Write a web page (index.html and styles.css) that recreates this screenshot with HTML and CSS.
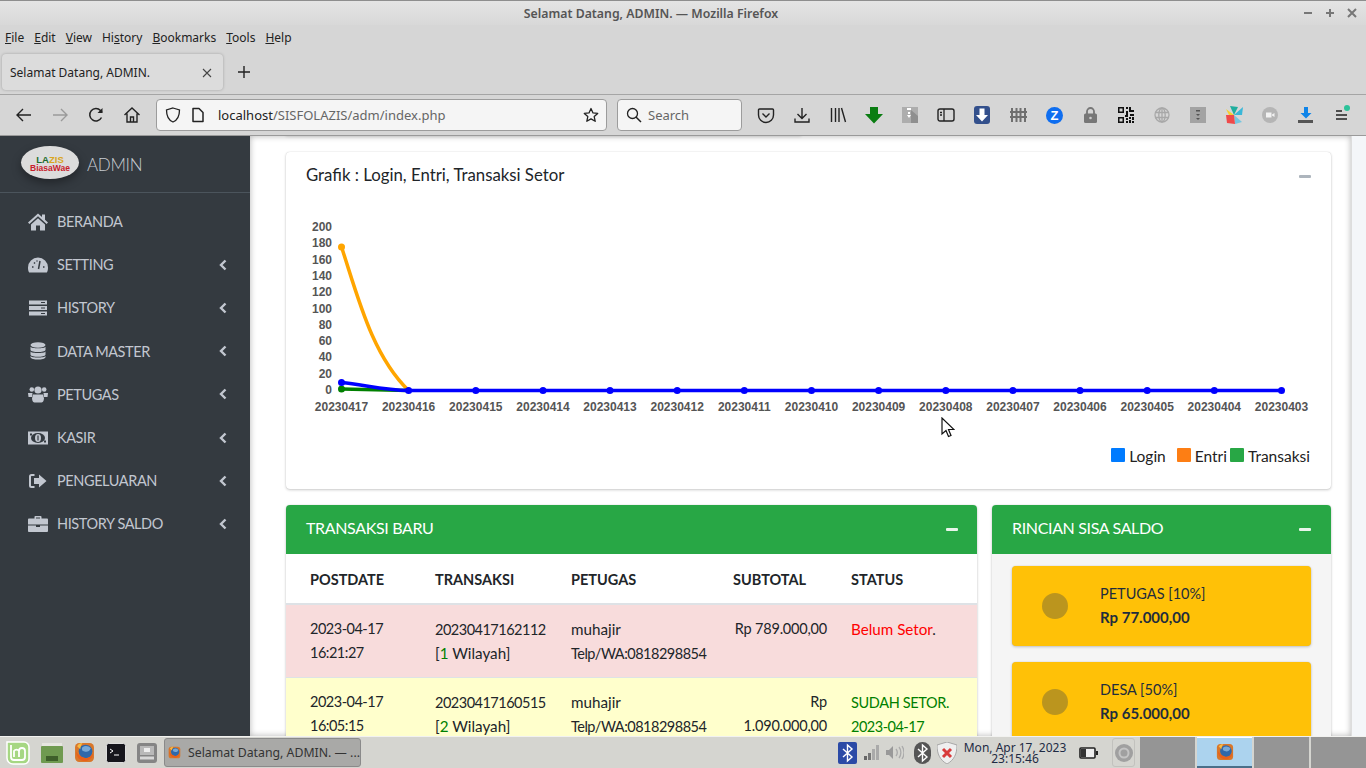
FILE: index.html
```html
<!DOCTYPE html>
<html lang="en">
<head>
    <meta charset="UTF-8">
    <title>Selamat Datang, ADMIN.</title>
    <link rel="stylesheet" href="styles.css">
</head>
<body>
    <svg class="defs" width="0" height="0">
        <symbol id="firefox" viewBox="0 0 20 20">
            <rect x="1" y="1" width="18" height="18" rx="4" fill="#d9772a"/>
            <circle cx="11" cy="9" r="6.500" fill="#2f68aa"/>
            <path d="M8 5c3-2 6-1 8 1-1 3-4 4-6 3-2 0-3-2-2-4z" fill="#79a9d6"/>
            <path d="M2 9c0 6 5 10 10 9 3-1 6-3 6-7-2 3-5 5-8 4-4-1-6-3-8-6z" fill="#e8601a"/>
            <path d="M3 4c1-2 3-3 5-3-1 2-2 4-2 6-1-1-2-2-3-3z" fill="#f4bb45"/>
        </symbol>
    </svg>

    <!-- Window title -->
    <div class="titlebar">
        <span class="title">Selamat Datang, ADMIN. — Mozilla Firefox</span>
        <div class="win-buttons">
            <svg width="10" height="10" viewBox="0 0 10 10"><path d="M1 5h8" stroke="#777" stroke-width="2"/></svg>
            <svg width="10" height="10" viewBox="0 0 10 10"><path d="M1 5h8M5 1v8" stroke="#777" stroke-width="2"/></svg>
            <svg width="10" height="10" viewBox="0 0 10 10"><path d="M1 1l8 8M9 1l-8 8" stroke="#777" stroke-width="2"/></svg>
        </div>
    </div>

    <div class="menubar">
        <span><u>F</u>ile</span>
        <span><u>E</u>dit</span>
        <span><u>V</u>iew</span>
        <span>Hi<u>s</u>tory</span>
        <span><u>B</u>ookmarks</span>
        <span><u>T</u>ools</span>
        <span><u>H</u>elp</span>
    </div>

    <div class="tabbar">
        <div class="tab">
            <span>Selamat Datang, ADMIN.</span>
            <svg width="10" height="10" viewBox="0 0 10 10"><path d="M1 1l8 8M9 1l-8 8" stroke="#444" stroke-width="1.1"/></svg>
        </div>
        <svg class="new-tab" width="14" height="14" viewBox="0 0 14 14"><path d="M7 1v12M1 7h12" stroke="#222" stroke-width="1.4"/></svg>
    </div>

    <div class="navbar">
        <div class="nav-left">
            <svg width="18" height="18" viewBox="0 0 18 18"><path d="M16 9H2M8 3L2 9l6 6" fill="none" stroke="#222" stroke-width="1.4"/></svg>
            <svg width="18" height="18" viewBox="0 0 18 18"><path d="M2 9h14M10 3l6 6-6 6" fill="none" stroke="#9a9a9a" stroke-width="1.4"/></svg>
            <svg width="18" height="18" viewBox="0 0 18 18"><path d="M14.5 11.5A6.2 6.2 0 1 1 13.5 4.5L15 6.5" fill="none" stroke="#222" stroke-width="1.5"/><path d="M15.5 2v5h-5z" fill="#222"/></svg>
            <svg width="18" height="18" viewBox="0 0 18 18"><path d="M1.5 9L9 2l7.5 7M4 7.5V16h10V7.5M7.5 16v-5h3v5" fill="none" stroke="#222" stroke-width="1.4"/></svg>
        </div>
        <div class="urlbar">
            <svg width="16" height="16" viewBox="0 0 16 16"><path d="M8 1l6.5 2c0 6-1.500 10-6.500 12C3 13 1.500 9 1.500 3z" fill="none" stroke="#222" stroke-width="1.300"/></svg>
            <svg class="page-icon" width="14" height="16" viewBox="0 0 14 16"><path d="M2 1.500h6l4 4v9H2z" fill="none" stroke="#222" stroke-width="1.500" stroke-linejoin="round"/></svg>
            <span class="url"><b>localhost</b>/SISFOLAZIS/adm/index.php</span>
            <svg width="16" height="16" viewBox="0 0 16 16"><path d="M8 1.500l2 4.400 4.700.5-3.500 3.200 1 4.700L8 11.900l-4.200 2.400 1-4.700L1.300 6.400 6 5.900z" fill="none" stroke="#222" stroke-width="1.300" stroke-linejoin="round"/></svg>
        </div>
        <div class="searchbar">
            <svg width="16" height="16" viewBox="0 0 16 16"><circle cx="6.500" cy="6.500" r="5" fill="none" stroke="#222" stroke-width="1.300"/><path d="M10 10l5 5" stroke="#222" stroke-width="1.500"/></svg>
            <span>Search</span>
        </div>
        <div class="tools">
            <div class="tool"><svg width="18" height="18" viewBox="0 0 18 18"><path d="M2.500 3h13a1 1 0 0 1 1 1v5a7.500 7.500 0 0 1-15 0V4a1 1 0 0 1 1-1z" fill="none" stroke="#222" stroke-width="1.400"/><path d="M5.500 7.500L9 11l3.500-3.500" fill="none" stroke="#222" stroke-width="1.400"/></svg></div>
            <div class="tool"><svg width="18" height="18" viewBox="0 0 18 18"><path d="M9 2v10M4.500 8L9 12.500 13.500 8M2 12.500V16h14v-3.500" fill="none" stroke="#222" stroke-width="1.400"/></svg></div>
            <div class="tool"><svg width="18" height="18" viewBox="0 0 18 18"><path d="M2.500 2v14M6.500 2v14M10 2v14M12.500 2l4 14" fill="none" stroke="#222" stroke-width="1.400"/></svg></div>
            <div class="tool"><svg width="18" height="18" viewBox="0 0 18 18"><path d="M5 1h8v7h5l-9 9.500L0 8h5z" fill="#0a7d12"/></svg></div>
            <div class="tool"><svg width="16" height="16" viewBox="0 0 16 16"><rect width="16" height="16" fill="#adadad"/><path d="M9 3l7 6v7H9z" fill="#8f8f8f"/><path d="M5 1h4v2H5zM6 5h2v2H6zM5 8h4l-2 3z" fill="#fff"/></svg></div>
            <div class="tool"><svg width="18" height="16" viewBox="0 0 18 16"><rect x="1" y="2" width="16" height="12" rx="2" fill="none" stroke="#222" stroke-width="1.400"/><path d="M7 2v12M3 5.500h2M3 8h2" stroke="#222" stroke-width="1.300"/></svg></div>
            <div class="tool"><svg width="16" height="18" viewBox="0 0 16 18"><rect width="16" height="18" rx="3" fill="#33508c"/><path d="M5.500 2.500h5V9H14l-6 6.500L2 9h3.500z" fill="#fff"/></svg></div>
            <div class="tool"><svg width="17" height="16" viewBox="0 0 17 16"><path d="M2 1v14M6.500 1v14M10.500 1v14M15 1v14M0 5h17M0 10h17" stroke="#6f6f6f" stroke-width="2"/></svg></div>
            <div class="tool"><svg width="17" height="17" viewBox="0 0 17 17"><circle cx="8.500" cy="8.500" r="8.500" fill="#0f6ef0"/><text class="zed" x="8.500" y="13" text-anchor="middle">Z</text></svg></div>
            <div class="tool"><svg width="13" height="16" viewBox="0 0 13 16"><path d="M3 7V4.500a3.500 3.500 0 0 1 7 0V7" fill="none" stroke="#777" stroke-width="1.800"/><rect y="6.500" width="13" height="9.500" rx="1.500" fill="#777"/><circle cx="6.500" cy="11" r="1.300" fill="#ccc"/></svg></div>
            <div class="tool"><svg width="16" height="16" viewBox="0 0 16 16"><path d="M0 0h6v6H0zM1.500 1.500v3h3v-3zM0 10h6v6H0zM1.500 11.500v3h3v-3zM8 0h2v2H8zM11 0h2v3h3v2h-5zM8 4h2v4H8zM7 8h3v2H7zM12 7h4v2h-4zM11 10h2v2h-2zM14 10h2v3h-2zM8 11h2v2H8zM11 13h2v3h-2zM8 14h2v2H8zM14 14h2v2h-2z" fill-rule="evenodd" fill="#111"/></svg></div>
            <div class="tool"><svg width="16" height="16" viewBox="0 0 16 16"><g fill="none" stroke="#a8a8a8" stroke-width="1.300"><circle cx="8" cy="8" r="7"/><ellipse cx="8" cy="8" rx="3.200" ry="7"/><path d="M1 5.500h14M1 10.500h14M8 1v14"/></g></svg></div>
            <div class="tool"><svg width="16" height="16" viewBox="0 0 16 16"><rect width="16" height="16" fill="#a3a3a3"/><path d="M6 3h4v1.500H6zM6 7h4l-2 2zM6 11h4l-2 2z" fill="#555"/></svg></div>
            <div class="tool"><svg width="18" height="18" viewBox="0 0 18 18"><path d="M1 3l8 6H4z" fill="#f6cf2f"/><path d="M5 0l4 9 4-8z" fill="#1fae9e"/><path d="M18 1L9 9h8z" fill="#39b7d8"/><path d="M17 16L9 9l1 9z" fill="#74c6e0"/><path d="M2 17l7-8 1 9zM1 9h8l-7 8z" fill="#ef4a4a"/></svg></div>
            <div class="tool"><svg width="16" height="16" viewBox="0 0 16 16"><circle cx="8" cy="8" r="8" fill="#b5b5b5"/><path d="M4 5.500h5.500v5H4zM10 7.500l2.500-1.500v4L10 8.500z" fill="#f2f2f2"/></svg></div>
            <div class="tool"><svg width="16" height="16" viewBox="0 0 16 16"><path d="M6 0h4v6h3.500L8 11.500 2.500 6H6z" fill="#0f84e8"/><rect y="13" width="15" height="3" fill="#555"/></svg></div>
            <div class="tool"><svg width="20" height="20" viewBox="0 0 20 20"><path d="M4 6h6M4 10h11M4 14h11" stroke="#222" stroke-width="1.500"/><circle cx="15" cy="3" r="3" fill="#2cc39a"/></svg></div>
        </div>
    </div>

    <!-- Page -->
    <div class="page">
        <aside class="sidebar">
            <div class="brand">
                <div class="logo">
                    <span class="logo-top"><i>LA</i><em>ZIS</em></span>
                    <span class="logo-bottom">BiasaWae</span>
                </div>
                <span class="brand-name">ADMIN</span>
            </div>
            <nav class="side-menu">
                <a class="side-item">
                    <svg class="side-icon" viewBox="0 0 20 18"><path d="M10 .500L0 9.500l1.400 1.500L10 3.300l8.600 7.700L20 9.500l-3-2.700V1.500h-3v2.600zM3 11.500L10 5.300l7 6.200V17.500h-5v-5H8v5H3z"/></svg>
                    <span>BERANDA</span>
                </a>
                <a class="side-item">
                    <svg class="side-icon" viewBox="0 0 20 18"><path d="M10 1.500A10 10 0 0 0 0 11.500c0 2.100.3 3.700 1.200 5h17.600c.9-1.300 1.200-2.900 1.200-5A10 10 0 0 0 10 1.500z"/><path d="M10.500 13L12 5M4 11h1.500M15 11h1.500M6 6.500l1 1M9 4.500v1" fill="none" stroke="#343a40" stroke-width="1.500"/></svg>
                    <span>SETTING</span>
                    <svg class="chev" viewBox="0 0 8 12"><path d="M6.500 1.500L2 6l4.500 4.500" /></svg>
                </a>
                <a class="side-item">
                    <svg class="side-icon" viewBox="0 0 20 18"><path d="M1 1.500h18v4H1zM1 7h18v4H1zM1 12.500h18v4H1z"/><path d="M13 3.500h4M13 9h4M13 14.500h4" stroke="#343a40" stroke-width="1.200"/></svg>
                    <span>HISTORY</span>
                    <svg class="chev" viewBox="0 0 8 12"><path d="M6.500 1.500L2 6l4.500 4.500" /></svg>
                </a>
                <a class="side-item">
                    <svg class="side-icon" viewBox="0 0 20 18"><ellipse cx="10" cy="3" rx="7.500" ry="2.800"/><path d="M2.500 4.800c1 2 14 2 15 0V8c-1 2.800-14 2.800-15 0zM2.500 9.500c1 2 14 2 15 0v3.200c-1 2.800-14 2.800-15 0zM2.500 14c1 2 14 2 15 0v1.200c-1 3.200-14 3.200-15 0z"/></svg>
                    <span>DATA MASTER</span>
                    <svg class="chev" viewBox="0 0 8 12"><path d="M6.500 1.500L2 6l4.500 4.500" /></svg>
                </a>
                <a class="side-item">
                    <svg class="side-icon" viewBox="0 0 20 18"><circle cx="3.800" cy="4.500" r="2.300"/><circle cx="16.200" cy="4.500" r="2.300"/><circle cx="10" cy="5" r="3.600"/><path d="M0 8h4.500L4 12H.5zM15.500 8H20l-.5 4H16zM5 9.500h10l1 4c-.3 3-1.500 4-2.500 4h-7C5.500 17.500 4.300 16.500 4 13.500z"/></svg>
                    <span>PETUGAS</span>
                    <svg class="chev" viewBox="0 0 8 12"><path d="M6.500 1.500L2 6l4.500 4.500" /></svg>
                </a>
                <a class="side-item">
                    <svg class="side-icon" viewBox="0 0 20 18"><path d="M0 2.500h20v13H0z"/><ellipse cx="10" cy="9" rx="7" ry="5" fill="#343a40"/><rect x="2" y="4.500" width="2" height="2" fill="#343a40"/><rect x="16" y="11.500" width="2" height="2" fill="#343a40"/><ellipse cx="10" cy="9" rx="3" ry="4"/><path d="M10 6.500v5" stroke="#343a40" stroke-width="1.200"/></svg>
                    <span>KASIR</span>
                    <svg class="chev" viewBox="0 0 8 12"><path d="M6.500 1.500L2 6l4.500 4.500" /></svg>
                </a>
                <a class="side-item">
                    <svg class="side-icon" viewBox="0 0 20 18"><path d="M6.500 3H3.500A1.500 1.500 0 0 0 2 4.500v9A1.500 1.500 0 0 0 3.500 15h3" fill="none" stroke="#c2c7d0" stroke-width="2"/><path d="M11 2.500L18.500 9 11 15.500V12H6V6h5z"/></svg>
                    <span>PENGELUARAN</span>
                    <svg class="chev" viewBox="0 0 8 12"><path d="M6.500 1.500L2 6l4.500 4.500" /></svg>
                </a>
                <a class="side-item">
                    <svg class="side-icon" viewBox="0 0 20 18"><path d="M6.500 3.500V1.800c0-.5.4-.8.8-.8h5.400c.4 0 .8.300.8.800v1.700h-1.500V2.500h-4v1zM1 3.500h18c.5 0 1 .5 1 1V9.500H0V4.500c0-.5.500-1 1-1zM0 10.500h8V12h4v-1.500h8V16c0 .5-.5 1-1 1H1c-.5 0-1-.5-1-1z"/></svg>
                    <span>HISTORY SALDO</span>
                    <svg class="chev" viewBox="0 0 8 12"><path d="M6.500 1.500L2 6l4.500 4.500" /></svg>
                </a>
            </nav>
        </aside>

        <main class="content">
            <div class="prev-card"></div>

            <!-- Chart card -->
            <section class="card">
                <div class="card-head">
                    <h3>Grafik : Login, Entri, Transaksi Setor</h3>
                    <span class="minus"></span>
                </div>
                <svg class="chart" viewBox="286 208 1045 226">
                    <g class="y-labels">
                        <text x="332" y="231">200</text>
                        <text x="332" y="247">180</text>
                        <text x="332" y="264">160</text>
                        <text x="332" y="280">140</text>
                        <text x="332" y="296">120</text>
                        <text x="332" y="313">100</text>
                        <text x="332" y="329">80</text>
                        <text x="332" y="345">60</text>
                        <text x="332" y="361">40</text>
                        <text x="332" y="378">20</text>
                        <text x="332" y="394">0</text>
                    </g>
                    <g class="x-labels">
                        <text x="341.500" y="411">20230417</text>
                        <text x="408.600" y="411">20230416</text>
                        <text x="475.800" y="411">20230415</text>
                        <text x="543" y="411">20230414</text>
                        <text x="610" y="411">20230413</text>
                        <text x="677.200" y="411">20230412</text>
                        <text x="744.300" y="411">20230411</text>
                        <text x="811.500" y="411">20230410</text>
                        <text x="878.600" y="411">20230409</text>
                        <text x="945.800" y="411">20230408</text>
                        <text x="1012.900" y="411">20230407</text>
                        <text x="1080" y="411">20230406</text>
                        <text x="1147.200" y="411">20230405</text>
                        <text x="1214.300" y="411">20230404</text>
                        <text x="1281.500" y="411">20230403</text>
                    </g>
                    <path class="line-orange" d="M341.500 247C358 297 372 355 408.600 390.500"/>
                    <circle cx="341.500" cy="247" r="3.500" fill="#ffa500"/>
                    <path class="line-green" d="M341.500 389L408.600 390.500"/>
                    <circle cx="341.500" cy="389" r="3.500" fill="#008000"/>
                    <path class="line-blue" d="M341.500 382.500C365 385 385 390.500 408.600 390.500H1281.500"/>
                    <g fill="#0000ff">
                        <circle cx="341.500" cy="382.500" r="3.500"/>
                        <circle cx="408.600" cy="390.500" r="3.500"/>
                        <circle cx="475.800" cy="390.500" r="3.500"/>
                        <circle cx="543" cy="390.500" r="3.500"/>
                        <circle cx="610" cy="390.500" r="3.500"/>
                        <circle cx="677.200" cy="390.500" r="3.500"/>
                        <circle cx="744.300" cy="390.500" r="3.500"/>
                        <circle cx="811.500" cy="390.500" r="3.500"/>
                        <circle cx="878.600" cy="390.500" r="3.500"/>
                        <circle cx="945.800" cy="390.500" r="3.500"/>
                        <circle cx="1012.900" cy="390.500" r="3.500"/>
                        <circle cx="1080" cy="390.500" r="3.500"/>
                        <circle cx="1147.200" cy="390.500" r="3.500"/>
                        <circle cx="1214.300" cy="390.500" r="3.500"/>
                        <circle cx="1281.500" cy="390.500" r="3.500"/>
                    </g>
                </svg>
                <div class="legend">
                    <span class="swatch blue"></span><span class="legend-text">Login</span>
                    <span class="swatch orange"></span><span class="legend-text short">Entri</span>
                    <span class="swatch green"></span><span class="legend-text">Transaksi</span>
                </div>
            </section>

            <div class="two-col">
                <section class="card panel-left">
                    <div class="green-head">
                        <h3>TRANSAKSI BARU</h3>
                        <span class="minus white"></span>
                    </div>
                    <table class="trans-table">
                        <thead>
                            <tr>
                                <th class="c1">POSTDATE</th>
                                <th class="c2">TRANSAKSI</th>
                                <th class="c3">PETUGAS</th>
                                <th class="c4">SUBTOTAL</th>
                                <th>STATUS</th>
                            </tr>
                        </thead>
                        <tbody>
                            <tr class="row-red">
                                <td class="c1 date">2023-04-17<br>16:21:27</td>
                                <td><span class="num">20230417162112</span><br>[<span class="count">1</span> Wilayah]</td>
                                <td>muhajir<br><span class="num">Telp/WA:0818298854</span></td>
                                <td class="money">Rp 789.000,00</td>
                                <td><span class="st-red">Belum Setor</span>.</td>
                            </tr>
                            <tr class="row-yellow">
                                <td class="c1 date">2023-04-17<br>16:05:15</td>
                                <td><span class="num">20230417160515</span><br>[<span class="count">2</span> Wilayah]</td>
                                <td>muhajir<br><span class="num">Telp/WA:0818298854</span></td>
                                <td class="money">Rp<br>1.090.000,00</td>
                                <td class="st-green"><span class="caps">SUDAH SETOR.</span><br><span class="num">2023-04-17</span></td>
                            </tr>
                        </tbody>
                    </table>
                </section>

                <section class="card panel-right">
                    <div class="green-head">
                        <h3>RINCIAN SISA SALDO</h3>
                        <span class="minus white"></span>
                    </div>
                    <div class="saldo-body">
                        <div class="info-box">
                            <span class="info-dot"></span>
                            <div class="info-text">
                                <span>PETUGAS [10%]</span>
                                <b>Rp 77.000,00</b>
                            </div>
                        </div>
                        <div class="info-box">
                            <span class="info-dot"></span>
                            <div class="info-text">
                                <span>DESA [50%]</span>
                                <b>Rp 65.000,00</b>
                            </div>
                        </div>
                    </div>
                </section>
            </div>
        </main>
        <div class="right-strip"></div>

        <!-- Mouse pointer -->
        <svg class="pointer" width="14" height="21" viewBox="0 0 14 21"><path d="M1 1v16l4-3.500 2.500 6 2.500-1-2.500-6H13z" fill="#fff" stroke="#111" stroke-width="1.200"/></svg>
    </div>

    <!-- Desktop panel -->
    <footer class="panel">
        <div class="launchers">
            <svg width="25" height="24" viewBox="0 0 25 24"><path d="M2 1h17a5 5 0 0 1 5 5v12a5 5 0 0 1-5 5H8a6 6 0 0 1-6-6z" fill="#a6d783" stroke="#fff" stroke-width="1.500"/><path d="M6 4v12a3 3 0 0 0 3 3h8a3 3 0 0 0 3-3V10a3 3 0 0 0-6 0v6M14 10a3 3 0 0 0-5 0v6" fill="none" stroke="#fff" stroke-width="1.800"/></svg>
            <svg width="22" height="20" viewBox="0 0 22 20"><rect x="1" y="0" width="20" height="4" fill="#e6e6e0"/><rect y="3" width="22" height="17" rx="1" fill="#6f9a50"/><rect x="5" y="13" width="12" height="5" fill="#3e5f2a"/></svg>
            <svg width="21" height="21"><use href="#firefox"/></svg>
            <svg width="20" height="20" viewBox="0 0 20 20"><rect x=".5" y=".5" width="19" height="19" rx="2" fill="#16161c" stroke="#ddd"/><path d="M4 6l3 2-3 2M8 12h5" fill="none" stroke="#fff" stroke-width="1"/></svg>
            <svg width="20" height="20" viewBox="0 0 20 20"><rect width="20" height="20" rx="3" fill="#858585"/><rect x="3" y="3" width="14" height="9" fill="#b9b9b9"/><rect x="7" y="5" width="6" height="4" fill="#eee"/><rect x="3" y="13.500" width="14" height="3" fill="#d8d8d8"/></svg>
        </div>
        <div class="window-btn">
            <svg width="19" height="19"><use href="#firefox"/></svg>
            <span>Selamat Datang, ADMIN. — ...</span>
        </div>
        <div class="tray">
            <svg width="19" height="22" viewBox="0 0 19 22"><rect width="19" height="22" rx="2" fill="#2b4aa6"/><path d="M5 7l9 8-4.500 4V3L14 7l-9 8" fill="none" stroke="#fff" stroke-width="1.400"/></svg>
            <svg width="15" height="15" viewBox="0 0 15 15"><path d="M0 11h3v4H0z" fill="#666"/><path d="M4 8h3v7H4z" fill="#777"/><path d="M8 4h3v11H8zM12 0h3v15h-3z" fill="#aaa"/></svg>
            <svg width="18" height="15" viewBox="0 0 18 15"><path d="M0 5h3l4-4v13l-4-4H0z" fill="#999"/><path d="M10 4c1.500 2 1.500 5 0 7M13 2c2.500 3 2.500 8 0 11M16 1c2.500 4 2.500 9 0 13" fill="none" stroke="#aaa" stroke-width="1.300"/></svg>
            <svg class="tray-bt" width="17" height="22" viewBox="0 0 17 22"><rect width="17" height="22" rx="8.500" fill="#555"/><path d="M4 7l9 8-4.500 4V3L13 7l-9 8" fill="none" stroke="#fff" stroke-width="1.400"/></svg>
            <svg width="20" height="22" viewBox="0 0 20 22"><path d="M10 0l10 3c0 9-3 15-10 19C3 18 0 12 0 3z" fill="#efefef" stroke="#999" stroke-width=".8"/><path d="M6 7l8 8M14 7l-8 8" stroke="#d83a3a" stroke-width="3"/></svg>
        </div>
        <div class="clock"><span>Mon, Apr 17, 2023</span><span>23:15:46</span></div>
        <svg class="battery" width="19" height="12" viewBox="0 0 19 12"><rect x="1" y="1" width="15" height="10" rx="1" fill="#eee" stroke="#222" stroke-width="1.600"/><rect x="2" y="2" width="5" height="8" fill="#333"/><rect x="17" y="4" width="2" height="4" fill="#222"/></svg>
        <div class="applet"><svg width="18" height="18" viewBox="0 0 18 18"><circle cx="9" cy="9" r="9" fill="#a0a0a0"/><circle cx="9" cy="9" r="4.500" fill="none" stroke="#c4c4c4" stroke-width="2"/></svg></div>
        <div class="pager">
            <div class="ws"></div>
            <div class="ws active"><svg width="18" height="18"><use href="#firefox"/></svg></div>
            <div class="ws"></div>
            <div class="ws"></div>
        </div>
    </footer>
</body>
</html>
```

FILE: styles.css
```css
/* Reset */
* {
    margin: 0;
    padding: 0;
    box-sizing: border-box;
}

html, body {
    width: 1366px;
    height: 768px;
    overflow: hidden;
}

body {
    display: flex;
    flex-direction: column;
    font-family: "Noto Sans", sans-serif;
    background-color: #d6d6d6;
    color: #222;
}

.defs {
    position: absolute;
}

/* Browser window */
.titlebar {
    height: 25px;
    flex: none;
    display: flex;
    align-items: center;
    justify-content: center;
    position: relative;
    padding-right: 64px;
    border-top: 1px solid #8e8e8e;
    background: linear-gradient(#e4e4e4, #d8d8d8);
}

.title {
    font-size: 12.3px;
    font-weight: 600;
    color: #555;
}

.win-buttons {
    position: absolute;
    right: 9px;
    top: 7px;
    display: flex;
    gap: 12px;
}

.menubar {
    height: 25px;
    flex: none;
    display: flex;
    align-items: center;
    gap: 10px;
    padding-left: 5px;
    font-size: 12px;
    color: #222;
}

.tabbar {
    height: 45px;
    flex: none;
    display: flex;
    align-items: center;
    padding-left: 2px;
    border-bottom: 1px solid #a5a5a5;
}

.tab {
    width: 221px;
    height: 36px;
    display: flex;
    align-items: center;
    justify-content: space-between;
    padding: 1px 11px 0 8px;
    font-size: 12px;
    background-color: #dcdcdc;
    border-radius: 4px;
    box-shadow: 0 0 3px rgba(0, 0, 0, 0.25);
}

.new-tab {
    margin-left: 14px;
}

.navbar {
    height: 41px;
    flex: none;
    display: flex;
    align-items: center;
    border-bottom: 1px solid #9a9a9a;
}

.nav-left {
    width: 156px;
    display: flex;
    gap: 18px;
    padding-left: 15px;
}

.urlbar {
    width: 451px;
    height: 32px;
    display: flex;
    align-items: center;
    padding: 0 7px 0 8px;
    background-color: #f5f5f5;
    border: 1px solid #9c9c9c;
    border-radius: 4px;
    font-size: 13px;
    color: #666;
}

.page-icon {
    margin-left: 10px;
}

.url {
    flex: 1;
    margin-left: 13px;
}

.url b {
    font-weight: normal;
    color: #222;
}

.searchbar {
    width: 125px;
    height: 32px;
    margin-left: 10px;
    display: flex;
    align-items: center;
    gap: 6px;
    padding-left: 8px;
    background-color: #f5f5f5;
    border: 1px solid #9c9c9c;
    border-radius: 4px;
    font-size: 13px;
    color: #666;
}

.tools {
    margin-left: 6px;
    display: flex;
}

.tool {
    width: 36px;
    display: flex;
    align-items: center;
    justify-content: center;
}

.zed {
    font-family: "Liberation Sans", sans-serif;
    font-size: 13px;
    font-weight: bold;
    fill: #fff;
}

/* Page */
.page {
    flex: 1;
    display: flex;
    position: relative;
    overflow: hidden;
    min-height: 0;
    font-family: Lato, sans-serif;
}

.sidebar {
    width: 250px;
    flex: none;
    background-color: #343a40;
    color: #c2c7d0;
}

.brand {
    height: 57px;
    display: flex;
    align-items: center;
    padding: 0 0 3px 21px;
    border-bottom: 1px solid #4b545c;
}

.logo {
    width: 58px;
    height: 33px;
    padding-top: 2px;
    border-radius: 50%;
    background-color: #dcdcdc;
    box-shadow: 0 4px 10px rgba(0, 0, 0, 0.35);
    display: flex;
    flex-direction: column;
    align-items: center;
    justify-content: center;
    font-family: "Liberation Sans", sans-serif;
    font-weight: bold;
    line-height: 9px;
}

.logo-top {
    font-size: 9.5px;
}

.logo-top i {
    font-style: normal;
    color: #1d6b2f;
}

.logo-top em {
    font-style: normal;
    color: #d9a520;
}

.logo-bottom {
    font-size: 8.5px;
    color: #c8202a;
}

.brand-name {
    margin-left: 8px;
    padding-top: 4px;
    font-size: 17px;
    font-weight: 300;
    letter-spacing: -0.3px;
    color: #c8ccd2;
}

.side-menu {
    display: flex;
    flex-direction: column;
    padding-top: 7px;
}

.side-item {
    height: 43.2px;
    display: flex;
    align-items: center;
    padding: 0 23px 0 28px;
    font-size: 14.5px;
    letter-spacing: -0.4px;
}

.side-icon {
    width: 20px;
    height: 18px;
    margin-right: 9px;
    fill: #c2c7d0;
}

.side-item span {
    flex: 1;
}

.chev {
    width: 8px;
    height: 12px;
    fill: none;
    stroke: #c2c7d0;
    stroke-width: 2.4;
}

.content {
    width: 1101px;
    flex: none;
    padding: 16px 20px 0 36px;
    background-color: #fff;
    box-shadow: 0 0 6px rgba(0, 0, 0, 0.3) inset;
    overflow: hidden;
}

.right-strip {
    flex: 1;
    background-color: #f4f6f9;
    border-left: 1px solid #ddd;
}

.prev-card {
    width: 515px;
    height: 1px;
    margin-top: -17px;
    margin-bottom: 16px;
    background-color: #fff;
    box-shadow: 0 0 3px rgba(0, 0, 0, 0.3);
}

.card {
    background-color: #fff;
    border-radius: 4px;
    box-shadow: 0 0 1px rgba(0, 0, 0, 0.2), 0 1px 3px rgba(0, 0, 0, 0.2);
}

.card-head {
    height: 45px;
    display: flex;
    align-items: center;
    justify-content: space-between;
    padding: 0 20px;
}

.card-head h3 {
    font-size: 16.8px;
    font-weight: normal;
    color: #212529;
}

.green-head h3 {
    font-size: 16px;
    font-weight: normal;
    letter-spacing: -0.35px;
    color: #fff;
}

.minus {
    width: 12px;
    height: 3px;
    margin-top: 3px;
    background-color: #adb5bd;
    border-radius: 1px;
}

.minus.white {
    background-color: #e8f5ea;
    margin-top: 4px;
}

.panel-left .minus {
    margin-right: -1px;
}

.chart {
    display: block;
    width: 1045px;
    height: 226px;
    margin-top: 11px;
    font-family: "Liberation Sans", sans-serif;
    font-size: 12px;
    font-weight: bold;
    fill: #555;
}

.y-labels text {
    text-anchor: end;
}

.x-labels text {
    text-anchor: middle;
}

.line-orange, .line-green, .line-blue {
    fill: none;
    stroke-width: 3.5;
}

.line-orange {
    stroke: #ffa500;
}

.line-green {
    stroke: #008000;
}

.line-blue {
    stroke: #0000ff;
}

.legend {
    height: 55px;
    display: flex;
    align-items: flex-start;
    justify-content: flex-end;
    padding: 14px 21px 0 0;
    font-size: 15.5px;
    line-height: 16px;
}

.swatch {
    width: 14px;
    height: 14px;
    margin-right: 4px;
    border-radius: 1px;
}

.swatch.blue {
    background-color: #007bff;
}

.swatch.orange {
    background-color: #fd7e14;
}

.swatch.green {
    background-color: #28a745;
}

.legend-text {
    margin-right: 11px;
}

.legend-text.short {
    margin-right: 3px;
}

.legend-text:last-child {
    margin-right: 0;
}

.two-col {
    display: flex;
    gap: 15px;
    margin-top: 16px;
}

.panel-left {
    width: 691px;
}

.panel-right {
    width: 339px;
}

.green-head {
    height: 49px;
    display: flex;
    align-items: center;
    justify-content: space-between;
    padding: 0 20px 4px;
    background-color: #28a745;
    border-radius: 4px 4px 0 0;
}

.trans-table {
    width: 100%;
    border-collapse: collapse;
    table-layout: fixed;
    font-size: 15.2px;
    line-height: 24px;
    color: #212529;
}

.trans-table th {
    height: 50px;
    padding: 2px 12px 0;
    text-align: left;
    font-size: 14.5px;
    font-weight: bold;
    border-bottom: 2px solid #dee2e6;
}

.trans-table td {
    padding: 11.5px 12px 12.5px;
    vertical-align: top;
    border-bottom: 1px solid #dee2e6;
}

.trans-table .c1 {
    width: 137px;
    padding-left: 24px;
}

.trans-table .date {
    padding-top: 12px;
    padding-bottom: 12px;
    font-size: 14.5px;
    letter-spacing: -0.5px;
}

.c2 {
    width: 136px;
}

.c3 {
    width: 162px;
}

.c4 {
    width: 118px;
}

.num {
    font-size: 14.5px;
    line-height: 1;
    letter-spacing: -0.5px;
}

.caps {
    font-size: 14.5px;
    line-height: 1;
    letter-spacing: -0.35px;
}

.money {
    text-align: right;
    font-size: 14.5px;
    letter-spacing: -0.2px;
}

.row-red {
    background-color: #f8dcdc;
}

.row-yellow {
    background-color: #ffffcc;
}

.count {
    color: #008000;
}

.st-red {
    color: #ff0000;
}

.st-green {
    color: #008000;
}

.saldo-body {
    display: flex;
    flex-direction: column;
    gap: 16px;
    padding: 12px 20px;
    background-color: #f5f5f5;
}

.info-box {
    height: 80px;
    display: flex;
    align-items: center;
    padding-left: 30px;
    background-color: #ffc107;
    border-radius: 4px;
    box-shadow: 0 0 1px rgba(0, 0, 0, 0.2), 0 1px 3px rgba(0, 0, 0, 0.2);
    color: #1f2d3d;
    font-size: 14.5px;
}

.info-dot {
    width: 26px;
    height: 26px;
    border-radius: 50%;
    background-color: #bb951e;
}

.info-text {
    display: flex;
    flex-direction: column;
    gap: 3px;
    margin: -2px 0 0 32px;
    line-height: 21px;
}

.info-text b {
    font-size: 15px;
}

.pointer {
    position: absolute;
    left: 941px;
    top: 281px;
}

/* Desktop panel */
.panel {
    height: 32px;
    flex: none;
    display: flex;
    align-items: center;
    background-color: #d5d5d0;
    border-top: 1px solid #f2f2f0;
    font-size: 12px;
    color: #333;
}

.launchers {
    width: 164px;
    display: flex;
    align-items: center;
    gap: 11px;
    padding-left: 5px;
}

.window-btn {
    width: 197px;
    height: 29px;
    display: flex;
    align-items: center;
    gap: 7px;
    padding-left: 3px;
    font-size: 12.3px;
    white-space: nowrap;
    background-color: #a9a9a7;
    border: 1px solid #8a8a8a;
    border-radius: 3px;
}

.tray {
    margin-left: 477px;
    display: flex;
    align-items: center;
    gap: 7px;
}

.tray-bt {
    margin: 0 -1px 0 3px;
}

.clock {
    width: 102px;
    margin-left: 7px;
    display: flex;
    flex-direction: column;
    align-items: center;
    line-height: 11px;
    color: #1e2b44;
    white-space: nowrap;
}

.battery {
    margin-left: 13px;
}

.applet {
    width: 23px;
    height: 29px;
    margin-left: 14px;
    display: flex;
    align-items: center;
    justify-content: center;
    border: 1px solid #c2c2be;
    border-radius: 3px;
}

.pager {
    flex: 1;
    height: 31px;
    margin-left: 5px;
    display: flex;
    gap: 2px;
}

.ws {
    flex: 1;
    background-color: #959595;
    display: flex;
    align-items: center;
    justify-content: center;
}

.ws.active {
    background-color: #acd3ee;
    border-top: 1px solid #fff;
    border-bottom: 2px solid #4a6f8a;
}
```
